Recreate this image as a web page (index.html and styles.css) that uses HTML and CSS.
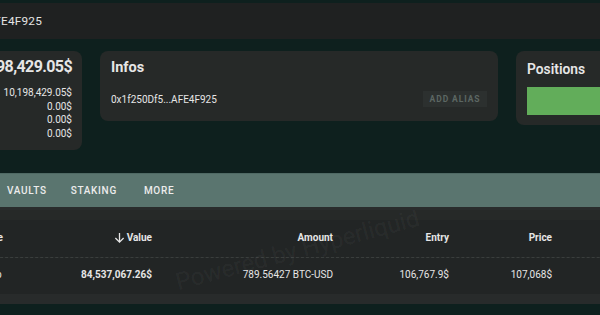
FILE: index.html
```html
<!DOCTYPE html>
<html>
<head>
<meta charset="utf-8">
<link rel="stylesheet" href="styles.css">
</head>
<body>
<div class="topbar"><span class="addr-top">0x1f250Df5...AFE4F925</span></div>
<div class="page">
  <div class="cards">
    <div class="card card-total">
      <div class="big">10,198,429.05$</div>
      <div class="line">10,198,429.05$</div>
      <div class="line">0.00$</div>
      <div class="line">0.00$</div>
      <div class="line">0.00$</div>
    </div>
    <div class="card card-info">
      <div class="title">Infos</div>
      <div class="info-row">
        <span class="addr">0x1f250Df5...AFE4F925</span>
        <span class="alias-btn">ADD ALIAS</span>
      </div>
    </div>
    <div class="card card-pos">
      <div class="title">Positions</div>
      <div class="bar"></div>
    </div>
  </div>
  <div class="tabs">
    <span class="tab">VAULTS</span>
    <span class="tab">STAKING</span>
    <span class="tab tab-more">MORE</span>
  </div>
  <div class="table">
    <div class="watermark">Powered by Hyperliquid</div>
    <div class="row head">
      <span class="c c1">Type</span>
      <span class="c c2"><svg class="arrow" viewBox="0 0 12 12" width="11" height="11"><path d="M6 1v10M1.5 6.5L6 11l4.5-4.5" fill="none" stroke="#e6e6e6" stroke-width="1.4"/></svg>Value</span>
      <span class="c c3">Amount</span>
      <span class="c c4">Entry</span>
      <span class="c c5">Price</span>
    </div>
    <div class="row body">
      <span class="c c1">Perp</span>
      <span class="c c2 strong">84,537,067.26$</span>
      <span class="c c3">789.56427 BTC-USD</span>
      <span class="c c4">106,767.9$</span>
      <span class="c c5">107,068$</span>
    </div>
    <div class="foot"></div>
  </div>
</div>
</body>
</html>
```
FILE: styles.css
```css
html, body {
  margin: 0;
  padding: 0;
  background: #0e201e;
  font-family: Roboto, "Liberation Sans", sans-serif;
  color: #e6e6e6;
  overflow: hidden;
  width: 600px;
  height: 315px;
}
.topbar {
  margin-top: 3px;
  height: 36px;
  background: #1f2121;
  display: flex;
  align-items: center;
  font-size: 11.8px;
  color: #e4e4e4;
}
.addr-top {
  display: inline-block;
  width: 200px;
  margin-left: -158px;
  text-align: right;
  white-space: nowrap;
  letter-spacing: 0.2px;
}
.page {
  margin-left: -40px;
  width: 760px;
}
.cards {
  display: flex;
  align-items: flex-start;
  gap: 18px;
  padding-top: 12px;
}
.card {
  background: #262928;
  border-radius: 8px;
  box-sizing: border-box;
  flex-shrink: 0;
}
.card-total {
  width: 122px;
  height: 99px;
  padding: 5px 10px 0 0;
  display: flex;
  flex-direction: column;
  align-items: flex-end;
  white-space: nowrap;
  overflow: hidden;
}
.big {
  font-size: 16px;
  font-weight: 700;
  letter-spacing: -0.6px;
  line-height: 22px;
  margin-bottom: 8px;
}
.line {
  font-size: 10px;
  line-height: 13.7px;
}
.card-info {
  width: 398px;
  height: 70px;
  padding: 6px 11px 0 11px;
}
.title {
  font-size: 14.5px;
  font-weight: 700;
  line-height: 22px;
}
.info-row {
  display: flex;
  justify-content: space-between;
  align-items: center;
  margin-top: 12px;
}
.addr {
  font-size: 10px;
}
.alias-btn {
  font-size: 8.5px;
  font-weight: 700;
  letter-spacing: 0.9px;
  color: #5c6763;
  background: #2c302f;
  width: 64px;
  height: 16px;
  display: flex;
  align-items: center;
  justify-content: center;
}
.card-pos {
  width: 200px;
  height: 74px;
  padding: 7px 11px 0 11px;
}
.card-pos .title {
  font-weight: 600;
  font-size: 13.8px;
}
.bar {
  margin-top: 7px;
  height: 28px;
  background: #62ad5a;
}
.tabs {
  margin-top: 23px;
  height: 33px;
  background: #5a756f;
  display: flex;
  align-items: center;
  padding-left: 47px;
  gap: 24px;
  border-top: 1px solid #4f6964;
}
.tab {
  font-size: 10px;
  font-weight: 500;
  letter-spacing: 0.7px;
  color: #ececec;
}
.tab-more { margin-left: 3px; }
.table {
  position: relative;
  background: #222525;
  border-top: 3px solid #2a2d2d;
  overflow: hidden;
}
.row {
  display: flex;
  align-items: center;
  font-size: 10px;
  padding-left: 21px;
  box-sizing: border-box;
}
.row.head {
  height: 48px;
  font-weight: 700;
  border-bottom: 1px dashed #3a3e3d;
  background: linear-gradient(#262928 0 10px, #222525 10px);
  padding-top: 8px;
}
.row.body {
  height: 36px;
  padding-bottom: 4px;
}
.c { text-align: right; white-space: nowrap; }
.c1 { width: 57px; text-align: left; }
.c2 { width: 114px; display: flex; justify-content: flex-end; align-items: center; }
.c3 { width: 181px; }
.c4 { width: 116px; }
.c5 { width: 103px; }
.strong { font-weight: 700; }
.arrow { margin-right: 2px; }
.foot {
  height: 10px;
  background: #282b2b;
}
.watermark {
  position: absolute;
  left: 212px;
  top: 26px;
  font-size: 24px;
  color: rgba(255,255,255,0.055);
  transform: rotate(-15deg);
  white-space: nowrap;
}
```
